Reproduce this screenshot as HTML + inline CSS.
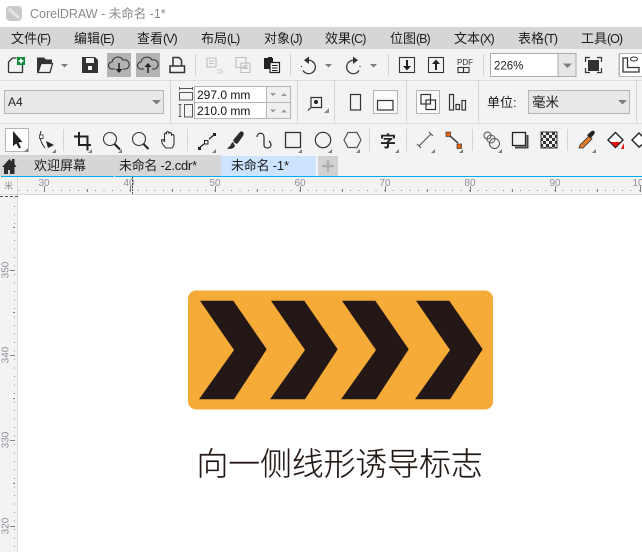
<!DOCTYPE html>
<html><head><meta charset="utf-8"><style>
html,body{margin:0;padding:0;background:#fff}
svg{display:block}
text{font-family:"Liberation Sans","Noto Sans CJK SC",sans-serif}
.m tspan{font-size:12.500px;letter-spacing:-1px}
</style></head><body>
<svg width="642" height="552" viewBox="0 0 642 552" xmlns="http://www.w3.org/2000/svg">
<defs>
<pattern id="hd" x="1.500" y="190" width="8.500" height="2" patternUnits="userSpaceOnUse"><rect width="1" height="1" fill="#8c8c8c"/></pattern>
<pattern id="vd" x="14" y="2" width="2" height="8.500" patternUnits="userSpaceOnUse"><rect width="1" height="1" fill="#8c8c8c"/></pattern>
<pattern id="ck" width="6" height="6" patternUnits="userSpaceOnUse"><rect width="3" height="3" fill="#333"/><rect x="3" y="3" width="3" height="3" fill="#333"/><rect x="3" width="3" height="3" fill="#eee"/><rect y="3" width="3" height="3" fill="#eee"/></pattern>
</defs>
<rect width="642" height="552" fill="#fff"/>
<!-- title -->
<rect x="6" y="6" width="16" height="15" rx="4" fill="#c9c9c9"/>
<path d="M9 9l10 9" stroke="#e4e4e4" stroke-width="3"/>
<text x="30" y="18" font-size="12.500" fill="#8a8a8a">CorelDRAW - 未命名 -1*</text>
<!-- menu -->
<rect y="27" width="642" height="22" fill="#d6d6d6"/>
<g class="m" font-size="13" fill="#1c1c1c">
<text x="11" y="43">文件<tspan>(F)</tspan></text><text x="74" y="43">编辑<tspan>(E)</tspan></text><text x="137" y="43">查看<tspan>(V)</tspan></text><text x="201" y="43">布局<tspan>(L)</tspan></text><text x="264" y="43">对象<tspan>(J)</tspan></text><text x="325" y="43">效果<tspan>(C)</tspan></text><text x="390" y="43">位图<tspan>(B)</tspan></text><text x="454" y="43">文本<tspan>(X)</tspan></text><text x="518" y="43">表格<tspan>(T)</tspan></text><text x="581" y="43">工具<tspan>(O)</tspan></text>
</g>
<!-- toolbars bg -->
<rect y="49" width="642" height="106" fill="#f3f3f3"/>
<rect y="80" width="642" height="1" fill="#dcdcdc"/>
<rect y="123" width="642" height="1" fill="#dcdcdc"/>
<!-- separators -->
<g fill="#d4d4d4">
<rect x="195" y="54" width="1" height="22"/><rect x="290" y="54" width="1" height="22"/><rect x="388" y="54" width="1" height="22"/><rect x="483" y="54" width="1" height="22"/><rect x="618" y="54" width="1" height="22"/>
<rect x="170" y="81" width="1" height="42"/><rect x="297" y="81" width="1" height="42"/><rect x="334" y="81" width="1" height="42"/><rect x="406" y="81" width="1" height="42"/><rect x="478" y="81" width="1" height="42"/><rect x="636" y="81" width="1" height="42"/>
<rect x="63" y="129" width="1" height="22"/><rect x="187" y="129" width="1" height="22"/><rect x="369" y="129" width="1" height="22"/><rect x="406" y="129" width="1" height="22"/><rect x="472" y="129" width="1" height="22"/><rect x="567" y="129" width="1" height="22"/>
</g>
<!-- row 1 icons -->
<g fill="none" stroke="#333" stroke-width="1.300">
<path d="M8.500 72.500V62l4-4h4M22.500 65V72.500H8.500"/>
<path d="M170 72.500h14.500V66h-14.500zM173 66V57.500h6l2.500 2.500V66" stroke-width="1.500"/>
</g>
<path d="M37 73V57.500h7l2 2h6V63h-11l-2.500 8" fill="#333"/>
<path d="M38 72.500h12l2.500-9h-11.500z" fill="#f3f3f3" stroke="#333" stroke-width="1.300"/>
<rect x="17" y="57" width="8" height="8" fill="#0a8a3a"/><path d="M21 58.500v5M18.500 61h5" stroke="#fff" stroke-width="1.500"/>
<path d="M61 64h7l-3.500 3.500z" fill="#7d7d7d"/>
<path d="M82 57h13l3 3v13H82z" fill="#333"/><rect x="86" y="58" width="8" height="5" fill="#f3f3f3"/><rect x="88" y="66" width="4" height="4" fill="#f3f3f3"/>
<rect x="107" y="53" width="24" height="24" fill="#b3b3b3"/><rect x="136" y="53" width="24" height="24" fill="#b3b3b3"/>
<g fill="none" stroke="#333" stroke-width="1.100">
<path d="M115 69h-3a3.500 3.500 0 0 1 0-7 6 6 0 0 1 11-2 4.500 4.500 0 0 1 3 9h-3"/>
<path d="M144 69h-3a3.500 3.500 0 0 1 0-7 6 6 0 0 1 11-2 4.500 4.500 0 0 1 3 9h-3"/>
</g>
<path d="M119 63v7" stroke="#222" stroke-width="1.500"/><path d="M115.500 69h7l-3.500 4z" fill="#222"/>
<path d="M148 73v-7" stroke="#222" stroke-width="1.500"/><path d="M144.500 67h7l-3.500-4z" fill="#222"/>
<!-- copy etc. -->
<g fill="none" stroke="#bdbdbd" stroke-width="1.100">
<path d="M207 58h9v9h-9zM209 61h5M209 63.500h5"/><path d="M217 70h5v3h-5" stroke-dasharray="2 1"/>
<path d="M236 57.500h10v10h-10zM241 63h9v9.500h-9zM243 66h5M243 68.500h5"/>
</g>
<path d="M264 58h9v4h2v7h-11z" fill="#222"/><rect x="268" y="57" width="4" height="2" fill="#222"/>
<path d="M270 62.500h9.500v10H270z" fill="#f3f3f3" stroke="#222" stroke-width="1.200"/><path d="M272 65.500h5.500M272 68h5.500M272 70.500h5.500" stroke="#222"/>
<!-- undo/redo -->
<g fill="none" stroke="#333" stroke-width="1.200">
<path d="M307 60.500a6.700 6.700 0 1 1-4 10"/><path d="M301.500 66v2" stroke-dasharray="1 1"/>
<path d="M355 60.500a6.700 6.700 0 1 0 4 10"/><path d="M360 66v2" stroke-dasharray="1 1"/>
</g>
<path d="M309 56.500v7.500l-5-3.700z" fill="#333"/><path d="M353 56.500v7.500l5-3.700z" fill="#333"/>
<path d="M325 64h7l-3.500 3.500z" fill="#7d7d7d"/><path d="M370 64h7l-3.500 3.500z" fill="#7d7d7d"/>
<!-- import/export/pdf -->
<g fill="none" stroke="#333" stroke-width="1.100">
<rect x="399.500" y="57.500" width="15" height="15"/><rect x="428.500" y="57.500" width="15" height="15"/>
<rect x="458" y="67.500" width="5.500" height="5"/><rect x="463.500" y="67.500" width="5.500" height="5"/>
</g>
<path d="M406 60h2v6h3l-4 4.500-4-4.500h3z" fill="#222"/><path d="M435 70h2v-6h3l-4-4.500-4 4.500h3z" fill="#222"/>
<text x="457" y="65" font-size="8" fill="#333">PDF</text>
<!-- zoom box -->
<rect x="490.500" y="53.500" width="85" height="23" fill="#fff" stroke="#aaa" stroke-width="1"/>
<rect x="558" y="53.500" width="18" height="23" fill="#e6e6e6" stroke="#aaa"/>
<path d="M563 63.500h9l-4.500 4.500z" fill="#7d7d7d"/>
<text x="494" y="69.500" font-size="11.500" fill="#222">226%</text>
<!-- fullscreen -->
<rect x="588" y="60" width="11" height="11" fill="#333"/>
<path d="M585.500 62v-4.500h4.500M597 57.500h4.500V62M601.500 68v4.500H597M590 72.500h-4.500V68" fill="none" stroke="#333" stroke-width="1.200"/>
<!-- options button -->
<rect x="619.500" y="53.500" width="30" height="23" fill="#fff" stroke="#b5b5b5"/>
<path d="M623 58v14h16v-4.500h-11.500V58z" fill="none" stroke="#333" stroke-width="1.300"/>
<ellipse cx="634" cy="59" rx="3.500" ry="2" fill="none" stroke="#333"/>
<!-- row 2 -->
<rect x="4.500" y="90.500" width="159" height="23" fill="#e8e8e8" stroke="#b4b4b4"/>
<text x="8" y="106" font-size="12" fill="#222">A4</text>
<path d="M152 100h9l-4.500 4.500z" fill="#7d7d7d"/>
<g fill="none" stroke="#555" stroke-width="1">
<path d="M179.500 88.500h13M179.500 87v3M192.500 87v3"/><rect x="179.500" y="92.500" width="13" height="7.500"/>
<path d="M180 104v13M178.500 104.500h3M178.500 116.500h3"/><rect x="184.500" y="104.500" width="8" height="12.500"/>
</g>
<rect x="194.500" y="86.500" width="96" height="16" fill="#fff" stroke="#b5b5b5"/>
<rect x="194.500" y="102.500" width="96" height="16" fill="#fff" stroke="#b5b5b5"/>
<rect x="267" y="87" width="23" height="31" fill="#f0f0f0"/><path d="M266.500 86.500v32" stroke="#b5b5b5"/>
<path d="M267 102.500h23.500M290.500 86.500v32" stroke="#b5b5b5"/>
<g fill="#9a9a9a"><path d="M270 93h6l-3 3zM270 109.500h6l-3 3z"/><path d="M281 96h6l-3-3zM281 112.500h6l-3-3z"/></g>
<text x="197" y="99" font-size="12" fill="#111">297.0 mm</text>
<text x="197" y="115" font-size="12" fill="#111">210.0 mm</text>
<path d="M311 97.500h10.500v10H311zM311 107.500l-3 3" fill="none" stroke="#333" stroke-width="1.200"/>
<circle cx="316" cy="102" r="2" fill="#222"/>
<path d="M324 113h5v-5z" fill="#8a8a8a"/>
<rect x="350.500" y="94.500" width="10" height="15.500" fill="none" stroke="#333" stroke-width="1.200"/>
<rect x="373.500" y="90.500" width="24" height="23" fill="#fafafa" stroke="#b5b5b5"/>
<rect x="377.500" y="100.500" width="15.500" height="9.500" fill="none" stroke="#333" stroke-width="1.200"/>
<rect x="416.500" y="90.500" width="23" height="23" fill="#fafafa" stroke="#b5b5b5"/>
<g fill="none" stroke="#333" stroke-width="1.200">
<rect x="421" y="94.500" width="9.500" height="9.500"/><rect x="426" y="100" width="9.500" height="9.500"/>
<rect x="449.500" y="94.500" width="4" height="15.500"/><rect x="456" y="104.500" width="3.500" height="5"/><rect x="462" y="100.500" width="3.500" height="9.500"/>
</g>
<text x="487" y="107" font-size="13" fill="#1a1a1a">单位:</text>
<rect x="528.500" y="90.500" width="101" height="23" fill="#e8e8e8" stroke="#b4b4b4"/>
<text x="532" y="107" font-size="13.500" fill="#1a1a1a">毫米</text>
<path d="M618 100h9l-4.500 4.500z" fill="#7d7d7d"/>
<!-- row 3 -->
<rect x="5.500" y="128.500" width="23" height="23" fill="#fff" stroke="#b5b5b5"/>
<path d="M13 131v15l3.300-2.500 2.700 5 2-1-2.500-5 4-.6z" fill="#222"/>
<g fill="#7f7f7f">
<path d="M28 152v-4l-4 4z"/><path d="M56 153v-4l-4 4z"/><path d="M92 153v-4l-4 4z"/><path d="M122 153v-4l-4 4z"/><path d="M216 153v-4l-4 4z"/><path d="M302 153v-4l-4 4z"/><path d="M332 153v-4l-4 4z"/><path d="M360 153v-4l-4 4z"/><path d="M399 153v-4l-4 4z"/><path d="M435 153v-4l-4 4z"/><path d="M463 153v-4l-4 4z"/><path d="M502 153v-4l-4 4z"/><path d="M596 153v-4l-4 4z"/>
</g>
<path d="M41 131c-2 6 0 12 4 17" fill="none" stroke="#333"/><rect x="39.500" y="135" width="3.500" height="3.500" fill="#fff" stroke="#333" stroke-width=".8"/>
<path d="M46 141l8 4-6 3z" fill="#222"/>
<path d="M79 132v13h12M74 136.500h13.500v14" fill="none" stroke="#222" stroke-width="2"/>
<g fill="none" stroke="#333" stroke-width="1.100"><circle cx="110" cy="139" r="6.500"/><circle cx="139" cy="139" r="6.500"/></g>
<path d="M114.500 144l5.500 5.500M143.500 144l5 5" stroke="#222" stroke-width="2"/>
<path d="M165 147c-3-3-3.500-5-3.500-7 1.200-1 2.500 0 3 2v-7.500c0-2 2-2 2 0v-1.500c0-2 2.500-2 2.500 0v1c0-2 2.500-2 2.500 0v2c0-2 2.500-2 2.500 0v7c0 3-1 4-2 5h-6z" fill="none" stroke="#333" stroke-width="1.100"/>
<path d="M199 148l5-4M209 139l5-4" stroke="#222" stroke-width="1.300"/><rect x="198" y="147" width="3" height="3" fill="#222"/><rect x="204.500" y="140.500" width="3.500" height="3.500" fill="none" stroke="#222"/><rect x="213" y="133" width="3" height="3" fill="#222"/>
<path d="M243 132c-1-1-2-1-3 0l-6 7c-1 1-1 2 0 3l1 1c1 1 2 1 3 0l5-7c1-2 1-3 0-4zM233 142c-2 1-2 3-3 4l-3 2.500c3 1 7 0 8-2.500z" fill="#2c2c2c"/>
<path d="M257 137c0-5 7-5 7 0v8c0 4 7 4 7 0 0-2-1-3-2-4" fill="none" stroke="#333" stroke-width="1.300"/>
<rect x="285.500" y="132.500" width="15" height="15" fill="none" stroke="#333" stroke-width="1.300"/>
<circle cx="323" cy="140" r="7.700" fill="none" stroke="#333" stroke-width="1.200"/>
<path d="M348 132.500h9l4 7.500-4 7.500h-9l-4-7.500z" fill="none" stroke="#555" stroke-width="1.200"/>
<text x="380" y="147" font-size="16" font-weight="700" fill="#222">字</text>
<path d="M419 146l12-12M417 144l4 4M429 132l4 4" fill="none" stroke="#555" stroke-width="1.100"/>
<path d="M450 136l8 7" stroke="#444" stroke-width="1.500"/><rect x="446" y="132" width="4.500" height="4.500" fill="#e8620a" stroke="#333" stroke-width=".7"/><rect x="457" y="144" width="4.500" height="4.500" fill="#e8620a" stroke="#333" stroke-width=".7"/>
<g fill="none" stroke="#555" stroke-width="1"><circle cx="487.500" cy="135.500" r="3.500"/><circle cx="491" cy="139" r="4"/><circle cx="494.500" cy="143.500" r="5"/></g>
<rect x="512.500" y="132.500" width="13" height="13" fill="none" stroke="#222" stroke-width="1.300"/><path d="M527.500 135v12.500H515" fill="none" stroke="#444" stroke-width="2"/>
<rect x="541" y="132" width="16" height="16" fill="url(#ck)" stroke="#333"/>
<path d="M579 148l1-3 9-9 3 3-9 9z" fill="#e07b2a" stroke="#333" stroke-width=".8"/><path d="M587 135l4-3.500c1-1 3-1 3.500 0s0 2.500-1 3.500l-3 3.500z" fill="#222"/>
<path d="M608 140l7.500-7.500 7.500 7.500-7.500 7.500z" fill="#fff" stroke="#222" stroke-width="1.400"/><path d="M610.500 142h10l-5 5z" fill="#e81010"/><path d="M621 149l3-6v6z" fill="#e81010"/>
<path d="M632 140l7-7 5 5v5l-5 4z" fill="#fff" stroke="#222" stroke-width="1.400"/>
<!-- tabs -->
<rect y="155" width="642" height="21" fill="#f3f3f3"/>
<rect y="155" width="221" height="21" fill="#d6d6d6"/>
<rect x="221" y="156" width="95" height="20" fill="#cce4ff"/>
<rect x="318" y="156" width="20" height="20" fill="#d2d2d2"/>
<path d="M328 160v12M322 166h12" stroke="#b0b0b0" stroke-width="2.500"/>
<path d="M2 167l7.500-8 2.500 2.500V159h2.500v5l2 3h-2v7h-4.500v-4h-2v4H4v-7z" fill="#2d2d2d"/>
<g font-size="13" fill="#1c1c1c"><text x="34" y="170">欢迎屏幕</text><text x="119" y="170" textLength="78" lengthAdjust="spacing">未命名 -2.cdr*</text><text x="231" y="170" textLength="58" lengthAdjust="spacing">未命名 -1*</text></g>
<rect x="1" y="176" width="641" height="1" fill="#00a8f0"/>
<rect x="114" y="176" width="1" height="1" fill="#f3f3f3"/>
<!-- rulers -->
<rect y="177" width="642" height="18" fill="#f3f3f3"/>
<rect x="0" y="195" width="18" height="357" fill="#f3f3f3"/>
<rect y="194" width="642" height="1" fill="#d8d8d8"/>
<rect x="17" y="177" width="1" height="375" fill="#d8d8d8"/>
<rect x="18" y="190" width="624" height="1" fill="url(#hd)"/>
<rect x="14" y="195" width="1" height="357" fill="url(#vd)"/>
<g fill="#808080">
<rect x="44" y="186" width="1" height="6"/><rect x="130" y="186" width="1" height="6"/><rect x="215" y="186" width="1" height="6"/><rect x="300" y="186" width="1" height="6"/><rect x="385" y="186" width="1" height="6"/><rect x="470" y="186" width="1" height="6"/><rect x="555" y="186" width="1" height="6"/><rect x="640" y="186" width="1" height="6"/>
<rect x="87" y="189" width="1" height="3"/><rect x="172" y="189" width="1" height="3"/><rect x="257" y="189" width="1" height="3"/><rect x="342" y="189" width="1" height="3"/><rect x="427" y="189" width="1" height="3"/><rect x="512" y="189" width="1" height="3"/><rect x="597" y="189" width="1" height="3"/>
<rect x="10" y="270" width="5" height="1"/><rect x="10" y="355" width="5" height="1"/><rect x="10" y="440" width="5" height="1"/><rect x="10" y="526" width="5" height="1"/>
<rect x="13" y="227" width="2" height="1"/><rect x="13" y="312" width="2" height="1"/><rect x="13" y="398" width="2" height="1"/><rect x="13" y="483" width="2" height="1"/>
</g>
<path d="M132.500 177v18" stroke="#555" stroke-dasharray="2 1"/>
<path d="M0 196.500h18" stroke="#555" stroke-dasharray="3 2"/>
<g font-size="10" fill="#8e8e9a" text-anchor="middle">
<text x="44" y="186">30</text><text x="129" y="186">40</text><text x="215" y="186">50</text><text x="300" y="186">60</text><text x="385" y="186">70</text><text x="470" y="186">80</text><text x="555" y="186">90</text><text x="638" y="186">10</text>
<text transform="translate(8.500,270) rotate(-90)">350</text><text transform="translate(8.500,355) rotate(-90)">340</text><text transform="translate(8.500,440) rotate(-90)">330</text><text transform="translate(8.500,526) rotate(-90)">320</text>
</g>
<text x="4" y="189" font-size="9" fill="#8e8e8e">米</text>
<!-- sign -->
<rect x="188" y="290.500" width="305" height="119" rx="8" fill="#f6ab39"/>
<g fill="#231815">
<path d="M200 300.700h33.300l33.400 48.600-32.700 50h-35l35-49.300z"/>
<path d="M271 300.700h33.300l33.400 48.600-32.700 50h-35l35-49.300z"/>
<path d="M342 300.700h33.300l33.400 48.600-32.700 50h-35l35-49.300z"/>
<path d="M416 300.700h33.300l33.400 48.600-32.700 50h-35l35-49.300z"/>
</g>
<text x="196.500" y="475" font-size="31.800" font-weight="300" fill="#231815" stroke="#231815" stroke-width=".2" style="font-family:'Noto Sans CJK SC',sans-serif">向一侧线形诱导标志</text>
</svg>
</body></html>
